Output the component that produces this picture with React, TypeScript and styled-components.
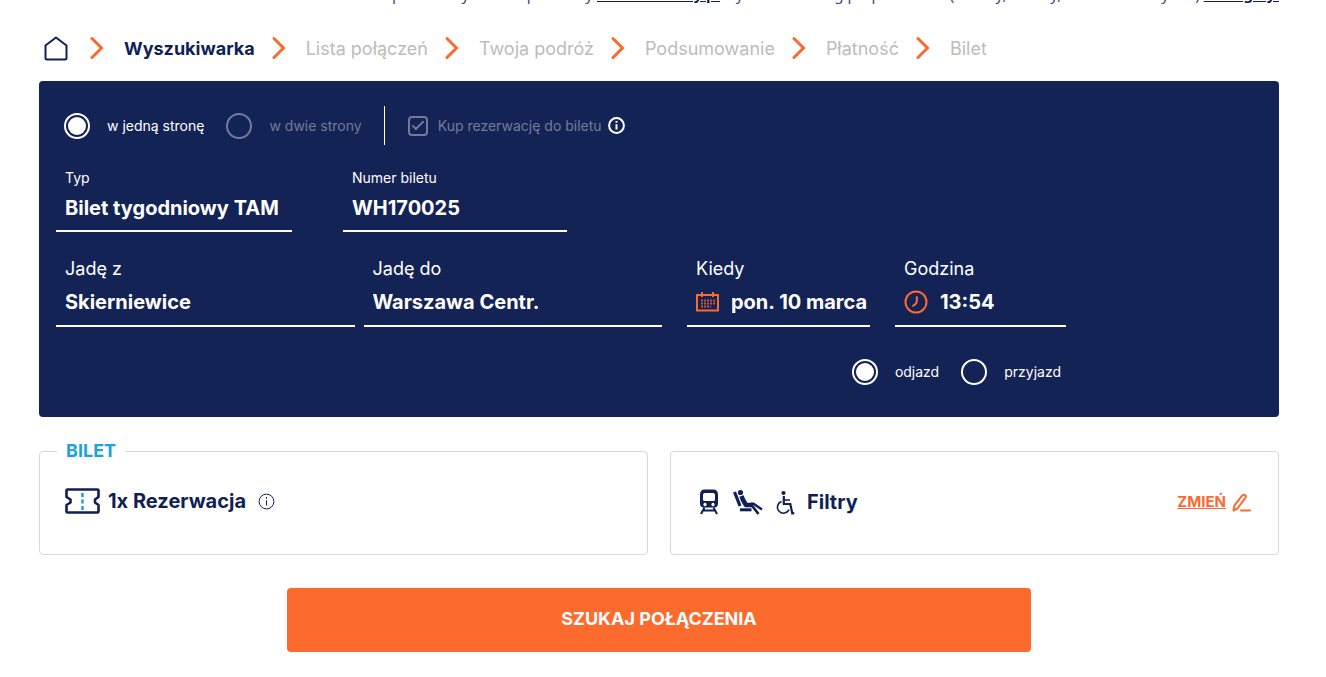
import React from 'react';
import styled, { createGlobalStyle } from 'styled-components';

const navy = '#142356';
const ink = '#101f55';
const orange = '#fc6a2e';
const sky = '#1ea2dc';
const line = '#ddd6d9';

const GlobalStyle = createGlobalStyle`
  *, *::before, *::after { box-sizing: border-box; }
  body { margin: 0; background: #fff; color: ${ink}; font-family: Inter, "Liberation Sans", sans-serif; }
  input, button { font-family: inherit; }
`;

const Page = styled.div`
  padding: 0 47px 0 39px;
`;

const Notice = styled.div`
  display: flex;
  align-items: flex-end;
  justify-content: flex-end;
  height: 4px;
  overflow: hidden;
`;

const NoticeText = styled.p`
  margin: 0;
  font-family: "Noto Sans", sans-serif;
  font-size: 15px;
  line-height: 20px;
  white-space: nowrap;
  color: #34477c;
`;

const NoticeLink = styled.a`
  color: ${ink};
  font-weight: 700;
`;

const Steps = styled.ol`
  display: flex;
  align-items: center;
  height: 77px;
  margin: 0;
  padding: 12px 0 0 4px;
  list-style: none;
`;

const Step = styled.li`
  display: flex;
  align-items: center;
`;

const StepLink = styled.a<{ $active?: boolean }>`
  display: flex;
  font-size: 18px;
  line-height: 24px;
  font-weight: ${p => (p.$active ? 700 : 400)};
  color: ${p => (p.$active ? ink : '#bcbcbc')};
  text-decoration: none;
`;

const HomeLink = styled(StepLink)`
  margin-right: 4px;
`;

const Chevron = styled.svg`
  width: 14px;
  height: 24px;
  margin: 0 20px 2px 17px;
  flex: none;
`;

const Panel = styled.section`
  padding: 25px 17px 32px;
  border-radius: 4px;
  background: ${navy};
  color: #fff;
`;

const Options = styled.div`
  display: flex;
  align-items: center;
  height: 39px;
  padding-left: 8px;
`;

const Choice = styled.label<{ $muted?: boolean }>`
  display: flex;
  align-items: center;
  gap: 17px;
  margin-right: 22px;
  font-size: 14px;
  line-height: 20px;
  color: ${p => (p.$muted ? '#727b9b' : '#fff')};
`;

const Radio = styled.input`
  appearance: none;
  display: grid;
  place-items: center;
  width: 26px;
  height: 26px;
  margin: 0;
  border: 2px solid;
  border-radius: 50%;
  color: inherit;
  border-color: currentColor;
  &:checked::before {
    content: '';
    width: 18px;
    height: 18px;
    border-radius: 50%;
    background: currentColor;
  }
`;

const Divider = styled.span`
  width: 1px;
  height: 39px;
  margin-right: 23px;
  background: #fff;
`;

const Tick = styled.label`
  display: flex;
  align-items: center;
  gap: 10px;
  margin-right: 6px;
  font-size: 14px;
  line-height: 20px;
  color: #727b9b;
`;

const Checkbox = styled.input`
  appearance: none;
  display: grid;
  place-items: center;
  width: 20px;
  height: 20px;
  margin: 0;
  border: 2px solid;
  border-radius: 4px;
  color: inherit;
  border-color: currentColor;
  &:checked::before {
    content: '';
    width: 12px;
    height: 6px;
    margin-bottom: 4px;
    border: solid currentColor;
    border-width: 0 0 2px 2px;
    transform: rotate(-45deg);
  }
`;

const IconButton = styled.button`
  display: flex;
  padding: 0;
  border: 0;
  background: none;
  color: inherit;
`;

const TicketRow = styled.div`
  display: grid;
  grid-template-columns: 236fr 224fr 644fr;
  column-gap: 51px;
  margin-top: 23px;
`;

const JourneyRow = styled.div`
  display: grid;
  grid-template-columns: 606fr 183fr 171fr 171fr;
  margin-top: 25px;
  column-gap: 25px;
`;

const Stations = styled.div`
  display: grid;
  grid-template-columns: 1fr 1fr;
  column-gap: 9px;
`;

const Field = styled.label<{ $large?: boolean }>`
  display: flex;
  flex-direction: column;
  height: ${p => (p.$large ? 70 : 64)}px;
  border-bottom: 2px solid #fff;
  font-size: ${p => (p.$large ? 18 : 14)}px;
  line-height: ${p => (p.$large ? 24 : 20)}px;
`;

const Caption = styled.span`
  padding-left: 9px;
`;

const ValueRow = styled.span`
  display: flex;
  align-items: center;
  flex: 1;
  gap: 12px;
  padding: 0 0 2px 9px;
`;

const Value = styled.input`
  flex: 1;
  width: 0;
  min-width: 0;
  height: 30px;
  padding: 0;
  border: 0;
  outline: 0;
  background: none;
  color: #fff;
  font-size: 20px;
  font-weight: 700;
`;

const TimeMode = styled.div`
  display: flex;
  justify-content: flex-end;
  margin: 32px 179px 0 0;
`;

const Cards = styled.div`
  display: grid;
  grid-template-columns: 1fr 1fr;
  column-gap: 22px;
  margin-top: 24px;
`;

const Card = styled.fieldset`
  min-width: 0;
  height: 114px;
  margin: 0;
  padding: 0 25px 12px;
  border: 1px solid ${line};
  border-radius: 4px;
`;

const PlainCard = styled.section`
  display: flex;
  align-items: center;
  height: 104px;
  margin-top: 10px;
  padding: 0 27px 2px 28px;
  border: 1px solid ${line};
  border-radius: 4px;
`;

const Legend = styled.legend`
  margin-left: -8px;
  padding: 0 9px;
  font-size: 18px;
  line-height: 20px;
  font-weight: 700;
  color: ${sky};
`;

const CardBody = styled.div`
  display: flex;
  align-items: center;
  height: 80px;
`;

const CardTitle = styled.h2`
  margin: 0 12px 0 8px;
  font-size: 20px;
  line-height: 26px;
  font-weight: 700;
`;

const FilterIcons = styled.div`
  display: flex;
  align-items: center;
  gap: 13px;
  margin-right: 4px;
`;

const EditLink = styled.a`
  display: flex;
  align-items: center;
  gap: 6px;
  margin-left: auto;
  font-size: 15px;
  line-height: 20px;
  font-weight: 700;
  color: ${orange};
`;

const Search = styled.button`
  display: block;
  width: 60%;
  height: 64px;
  margin: 33px auto 25px;
  padding: 0 0 4px;
  border: 0;
  border-radius: 4px;
  background: ${orange};
  color: #fff;
  font-size: 18px;
  font-weight: 700;
`;

const Arrow = () => (
  <Chevron viewBox="0 0 14 24" aria-hidden="true">
    <path d="M2 2.5 11.5 12 2 21.5" fill="none" stroke={orange} strokeWidth="3" strokeLinecap="round" />
  </Chevron>
);

const Info = ({ weight = 2 }: { weight?: number }) => (
  <svg width="17" height="17" viewBox="0 0 17 17" fill="none" stroke="currentColor" strokeWidth={weight} aria-hidden="true">
    <circle cx="8.5" cy="8.5" r="7.4" />
    <path d="M8.5 7.3v5.2M8.5 4v1.800" />
  </svg>
);

const Calendar = () => (
  <svg width="23" height="20" viewBox="0 0 23 20" fill="none" stroke={orange} aria-hidden="true">
    <path d="M1 3h21v15.5H1zM6 0v5M17 0v5" strokeWidth="2" />
    <path d="M5 8.5h14M5 11.5h14M5 14.5h10" strokeWidth="2" strokeDasharray="2 1" opacity=".75" />
  </svg>
);

const Clock = () => (
  <svg width="24" height="24" viewBox="0 0 24 24" fill="none" stroke={orange} strokeWidth="2" strokeLinecap="round" aria-hidden="true">
    <circle cx="12" cy="12" r="10.5" />
    <path d="M12.8 7v4.2q0 2.6-3.8 4.6" />
  </svg>
);

const Ticket = () => (
  <svg width="35" height="26" viewBox="0 0 35 26" fill="none" aria-hidden="true">
    <path
      d="M2.500 1.500h30q1 0 1 1v6.500l-3.500 2.500v3l3.500 2.500v6.500q0 1-1 1h-30q-1 0-1-1V17l4-2.500v-3L1.500 9V2.500q0-1 1-1z"
      stroke={ink}
      strokeWidth="2.600"
      strokeLinejoin="round"
    />
    <path d="M17.500 5v17" stroke={sky} strokeWidth="2.500" strokeDasharray="4 2.500" />
  </svg>
);

const Train = () => (
  <svg width="20" height="26" viewBox="0 0 20 26" aria-hidden="true">
    <path
      fillRule="evenodd"
      fill={ink}
      d="M5.500.500h9Q19 .500 19 6v8.500q0 4-4 4H5q-4 0-4-4V6Q1 .500 5.500.500zM6 4Q4 4 4 6v4.500q0 1.500 1.500 1.500h9q1.500 0 1.500-1.500V6q0-2-2-2zM6 13.800a1.700 1.700 0 1 0 .01 0zM14 13.800a1.700 1.700 0 1 0 .01 0z"
    />
    <path d="M5.500 18.500 2 25M14.500 18.500 18 25M4.500 21.500h11" stroke={ink} strokeWidth="2" />
  </svg>
);

const Seat = () => (
  <svg width="31" height="26" viewBox="0 0 31 26" fill="none" stroke={ink} aria-hidden="true">
    <circle cx="8.500" cy="3.500" r="2.600" fill={ink} stroke="none" />
    <path d="M2.500 3 8 17" strokeWidth="3.200" />
    <path d="m9.500 7 1.500 4 3 5h6.500" strokeWidth="4.600" strokeLinejoin="round" />
    <path d="M19 14.800h2.500L30 20.500" strokeWidth="2.400" />
    <path d="m19.500 16 7 9" strokeWidth="2.600" />
    <path d="M8 20.800h11.500" strokeWidth="3" />
  </svg>
);

const Wheelchair = () => (
  <svg width="19" height="25" viewBox="0 0 19 25" fill="none" stroke={ink} aria-hidden="true">
    <circle cx="7.500" cy="3" r="2.100" fill={ink} stroke="none" />
    <path d="M7.800 6v8h6.500l2 9.500 2-.500" strokeWidth="2.200" />
    <path d="M8 10h6" strokeWidth="1.500" />
    <path d="M5.500 11.500a6 6 0 1 0 7.500 8" strokeWidth="1.600" />
  </svg>
);

const Pen = () => (
  <svg width="19" height="19" viewBox="0 0 19 19" fill="none" stroke={orange} strokeWidth="2" strokeLinejoin="round" strokeLinecap="round" aria-hidden="true">
    <path d="m1.500 17.500.8-4.800L10.500 2.200q1.200-1 2.500 0 1.500 1 .5 2.500L5.500 15.500zM9 17.500h9" />
  </svg>
);

const steps = ['Lista połączeń', 'Twoja podróż', 'Podsumowanie', 'Płatność', 'Bilet'];

type FieldProps = { label: string; value: string; large?: boolean; icon?: React.ReactNode };

const TextField = ({ label, value, large, icon }: FieldProps) => (
  <Field $large={large}>
    <Caption>{label}</Caption>
    <ValueRow>
      {icon}
      <Value defaultValue={value} />
    </ValueRow>
  </Field>
);

export default function App() {
  return (
    <>
      <GlobalStyle />
      <Page>
        <Notice>
          <NoticeText>
            posiadaczy kart na podróżny <NoticeLink href="#intercity">www.intercity.pl</NoticeLink> wybieranie usług
            proponowane (rowery, obiady, lub strefa ciszy itd.) <NoticeLink href="#details">Szczegóły.</NoticeLink>
          </NoticeText>
        </Notice>
        <nav aria-label="Etapy">
          <Steps>
            <Step>
              <HomeLink href="#home" aria-label="Strona główna">
                <svg width="26" height="26" viewBox="0 0 26 26" fill="none" stroke={ink} strokeWidth="2" strokeLinejoin="round">
                  <path d="M13 1.500 23.500 9.500V22q0 1.500-1.500 1.500H4Q2.500 23.500 2.500 22V9.500z" />
                </svg>
              </HomeLink>
            </Step>
            <Step>
              <Arrow />
              <StepLink href="#search" $active aria-current="step">Wyszukiwarka</StepLink>
            </Step>
            {steps.map(s => (
              <Step key={s}>
                <Arrow />
                <StepLink href="#next">{s}</StepLink>
              </Step>
            ))}
          </Steps>
        </nav>
        <form onSubmit={e => e.preventDefault()}>
          <Panel>
            <Options>
              <Choice>
                <Radio type="radio" name="direction" defaultChecked />
                w jedną stronę
              </Choice>
              <Choice $muted>
                <Radio type="radio" name="direction" disabled />
                w dwie strony
              </Choice>
              <Divider />
              <Tick>
                <Checkbox type="checkbox" defaultChecked disabled />
                Kup rezerwację do biletu
              </Tick>
              <IconButton type="button" aria-label="Informacja o rezerwacji">
                <Info />
              </IconButton>
            </Options>
            <TicketRow>
              <TextField label="Typ" value="Bilet tygodniowy TAM" />
              <TextField label="Numer biletu" value="WH170025" />
            </TicketRow>
            <JourneyRow>
              <Stations>
                <TextField large label="Jadę z" value="Skierniewice" />
                <TextField large label="Jadę do" value="Warszawa Centr." />
              </Stations>
              <TextField large label="Kiedy" value="pon. 10 marca" icon={<Calendar />} />
              <TextField large label="Godzina" value="13:54" icon={<Clock />} />
            </JourneyRow>
            <TimeMode>
              <Choice>
                <Radio type="radio" name="time" defaultChecked />
                odjazd
              </Choice>
              <Choice>
                <Radio type="radio" name="time" />
                przyjazd
              </Choice>
            </TimeMode>
          </Panel>
          <Cards>
            <Card>
              <Legend>BILET</Legend>
              <CardBody>
                <Ticket />
                <CardTitle>1x Rezerwacja</CardTitle>
                <IconButton type="button" aria-label="Informacja o bilecie">
                  <Info weight={1} />
                </IconButton>
              </CardBody>
            </Card>
            <PlainCard>
              <FilterIcons>
                <Train />
                <Seat />
                <Wheelchair />
              </FilterIcons>
              <CardTitle>Filtry</CardTitle>
              <EditLink href="#filters">
                ZMIEŃ
                <Pen />
              </EditLink>
            </PlainCard>
          </Cards>
          <Search type="submit">SZUKAJ POŁĄCZENIA</Search>
        </form>
      </Page>
    </>
  );
}
